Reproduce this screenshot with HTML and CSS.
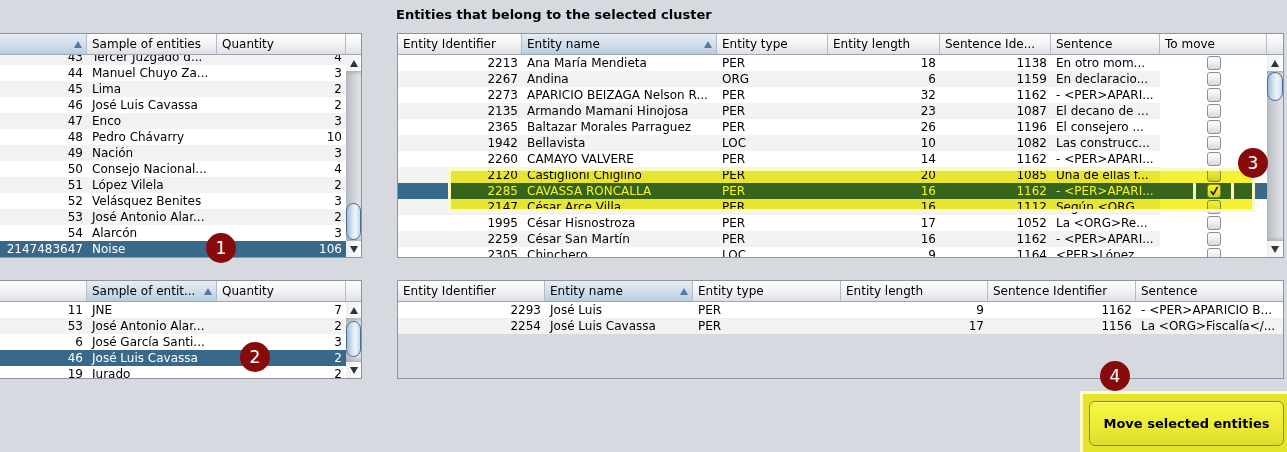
FILE: index.html
```html
<!DOCTYPE html>
<html>
<head>
<meta charset="utf-8">
<link rel="stylesheet" href="styles.css">
</head>
<body>
<div class="screen">
  <div class="app">
    <div class="left">
      <div class="table lt">
        <div class="thead">
          <div class="th sorted"><span class="arrow"></span></div>
          <div class="th">Sample of entities</div>
          <div class="th">Quantity</div>
          <div class="th corner"></div>
        </div>
        <div class="tbody">
          <div class="viewport">
            <div class="rows scrolled">
              <div class="row s"><span class="n">43</span><span>Tercer Juzgado d...</span><span class="n">4</span></div>
              <div class="row"><span class="n">44</span><span>Manuel Chuyo Za...</span><span class="n">3</span></div>
              <div class="row s"><span class="n">45</span><span>Lima</span><span class="n">2</span></div>
              <div class="row"><span class="n">46</span><span>José Luis Cavassa</span><span class="n">2</span></div>
              <div class="row s"><span class="n">47</span><span>Enco</span><span class="n">3</span></div>
              <div class="row"><span class="n">48</span><span>Pedro Chávarry</span><span class="n">10</span></div>
              <div class="row s"><span class="n">49</span><span>Nación</span><span class="n">3</span></div>
              <div class="row"><span class="n">50</span><span>Consejo Nacional...</span><span class="n">4</span></div>
              <div class="row s"><span class="n">51</span><span>López Vilela</span><span class="n">2</span></div>
              <div class="row"><span class="n">52</span><span>Velásquez Benites</span><span class="n">3</span></div>
              <div class="row s"><span class="n">53</span><span>José Antonio Alar...</span><span class="n">2</span></div>
              <div class="row"><span class="n">54</span><span>Alarcón</span><span class="n">3</span></div>
              <div class="row sel"><span class="n">2147483647</span><span>Noise</span><span class="n">106</span></div>
            </div>
          </div>
          <div class="sb">
            <div class="sb-btn up"></div>
            <div class="track"><div class="thumb th-lt"></div></div>
            <div class="sb-btn down"></div>
          </div>
        </div>
      </div>

      <div class="table lb">
        <div class="thead">
          <div class="th"></div>
          <div class="th sorted"><span>Sample of entit...</span><span class="arrow"></span></div>
          <div class="th">Quantity</div>
          <div class="th corner"></div>
        </div>
        <div class="tbody">
          <div class="viewport">
            <div class="rows">
              <div class="row"><span class="n">11</span><span>JNE</span><span class="n">7</span></div>
              <div class="row s"><span class="n">53</span><span>José Antonio Alar...</span><span class="n">2</span></div>
              <div class="row"><span class="n">6</span><span>José García Santi...</span><span class="n">3</span></div>
              <div class="row sel"><span class="n">46</span><span>José Luis Cavassa</span><span class="n">2</span></div>
              <div class="row"><span class="n">19</span><span>Jurado</span><span class="n">2</span></div>
            </div>
          </div>
          <div class="sb">
            <div class="sb-btn up"></div>
            <div class="track"><div class="thumb th-lb"></div></div>
            <div class="sb-btn down"></div>
          </div>
        </div>
      </div>
    </div>

    <div class="right">
      <h2 class="title">Entities that belong to the selected cluster</h2>

      <div class="table rt">
        <div class="thead">
          <div class="th">Entity Identifier</div>
          <div class="th sorted"><span>Entity name</span><span class="arrow"></span></div>
          <div class="th">Entity type</div>
          <div class="th">Entity length</div>
          <div class="th">Sentence Ide...</div>
          <div class="th">Sentence</div>
          <div class="th">To move</div>
          <div class="th corner"></div>
        </div>
        <div class="tbody">
          <div class="viewport">
            <div class="rows">
              <div class="row"><span class="n">2213</span><span>Ana María Mendieta</span><span>PER</span><span class="n">18</span><span class="n">1138</span><span>En otro mom...</span><span class="cb"><i class="box"></i></span></div>
              <div class="row s"><span class="n">2267</span><span>Andina</span><span>ORG</span><span class="n">6</span><span class="n">1159</span><span>En declaracio...</span><span class="cb"><i class="box"></i></span></div>
              <div class="row"><span class="n">2273</span><span>APARICIO BEIZAGA Nelson R...</span><span>PER</span><span class="n">32</span><span class="n">1162</span><span>- &lt;PER&gt;APARI...</span><span class="cb"><i class="box"></i></span></div>
              <div class="row s"><span class="n">2135</span><span>Armando Mamani Hinojosa</span><span>PER</span><span class="n">23</span><span class="n">1087</span><span>El decano de ...</span><span class="cb"><i class="box"></i></span></div>
              <div class="row"><span class="n">2365</span><span>Baltazar Morales Parraguez</span><span>PER</span><span class="n">26</span><span class="n">1196</span><span>El consejero ...</span><span class="cb"><i class="box"></i></span></div>
              <div class="row s"><span class="n">1942</span><span>Bellavista</span><span>LOC</span><span class="n">10</span><span class="n">1082</span><span>Las construcc...</span><span class="cb"><i class="box"></i></span></div>
              <div class="row"><span class="n">2260</span><span>CAMAYO VALVERE</span><span>PER</span><span class="n">14</span><span class="n">1162</span><span>- &lt;PER&gt;APARI...</span><span class="cb"><i class="box"></i></span></div>
              <div class="row s"><span class="n">2120</span><span>Castiglioni Chiglino</span><span>PER</span><span class="n">20</span><span class="n">1085</span><span>Una de ellas f...</span><span class="cb"><i class="box"></i></span></div>
              <div class="row sel"><span class="n">2285</span><span>CAVASSA RONCALLA</span><span>PER</span><span class="n">16</span><span class="n">1162</span><span>- &lt;PER&gt;APARI...</span><span class="cb"><i class="box checked"><svg width="10" height="10" viewBox="0 0 10 10"><path d="M1.8 5.2 L4.3 8.3 L8.6 0.8" fill="none" stroke="#1e1e1e" stroke-width="1.7"/></svg></i></span></div>
              <div class="row s"><span class="n">2147</span><span>César Arce Villa</span><span>PER</span><span class="n">16</span><span class="n">1112</span><span>Según &lt;ORG...</span><span class="cb"><i class="box"></i></span></div>
              <div class="row"><span class="n">1995</span><span>César Hisnostroza</span><span>PER</span><span class="n">17</span><span class="n">1052</span><span>La &lt;ORG&gt;Re...</span><span class="cb"><i class="box"></i></span></div>
              <div class="row s"><span class="n">2259</span><span>César San Martín</span><span>PER</span><span class="n">16</span><span class="n">1162</span><span>- &lt;PER&gt;APARI...</span><span class="cb"><i class="box"></i></span></div>
              <div class="row"><span class="n">2305</span><span>Chinchero</span><span>LOC</span><span class="n">9</span><span class="n">1164</span><span>&lt;PER&gt;López...</span><span class="cb"><i class="box"></i></span></div>
            </div>
          </div>
          <div class="sb">
            <div class="sb-btn up"></div>
            <div class="track"><div class="thumb th-rt"></div></div>
            <div class="sb-btn down"></div>
          </div>
        </div>
        <div class="hl"><div class="hl-fill"></div></div>
        <div class="focus"></div>
      </div>

      <div class="table rb">
        <div class="thead">
          <div class="th">Entity Identifier</div>
          <div class="th sorted"><span>Entity name</span><span class="arrow"></span></div>
          <div class="th">Entity type</div>
          <div class="th">Entity length</div>
          <div class="th">Sentence Identifier</div>
          <div class="th last">Sentence</div>
        </div>
        <div class="tbody">
          <div class="viewport">
            <div class="rows">
              <div class="row"><span class="n">2293</span><span>José Luis</span><span>PER</span><span class="n">9</span><span class="n">1162</span><span>- &lt;PER&gt;APARICIO B...</span></div>
              <div class="row s"><span class="n">2254</span><span>José Luis Cavassa</span><span>PER</span><span class="n">17</span><span class="n">1156</span><span>La &lt;ORG&gt;Fiscalía&lt;/...</span></div>
            </div>
          </div>
        </div>
      </div>

      <div class="actions">
        <div class="hlbox">
          <button class="btn">Move selected entities</button>
        </div>
      </div>
    </div>
  </div>

  <div class="badge b1">1</div>
  <div class="badge b2">2</div>
  <div class="badge b3">3</div>
  <div class="badge b4">4</div>
</div>
</body>
</html>
```

FILE: styles.css
```css
* { box-sizing: border-box; }
html, body { margin: 0; padding: 0; }
body {
  width: 1287px;
  height: 452px;
  overflow: hidden;
  background: #d6d9df;
  font-family: "DejaVu Sans", sans-serif;
  font-size: 12px;
  color: #000;
}
.screen { position: relative; width: 1287px; height: 452px; overflow: hidden; }
.app { display: flex; gap: 35px; }

.left {
  flex: none;
  width: 402px;
  margin-left: -40px;
  padding-top: 33px;
  display: flex;
  flex-direction: column;
  gap: 22px;
}
.right { flex: none; width: 887px; display: flex; flex-direction: column; }
.title {
  margin: 0 0 10px -1px;
  padding-top: 7px;
  font-size: 13px;
  line-height: 16px;
  font-weight: bold;
}

.table { border: 1px solid #8f949b; background: #fff; }
.lt, .lb { --cols: 126px 130px 129px; --hcols: 126px 130px 129px 15px; }
.lt, .rt { --bh: 202px; }
.lb, .rb { --bh: 76px; }
.rt { position: relative; --cols: 124px 195px 111px 112px 111px 109px 107px; --hcols: 124px 195px 111px 112px 111px 109px 107px 16px; }
.rb { margin-top: 22px; background: #d6d9df; --cols: 147px 148px 148px 147px 148px 147px; --hcols: var(--cols); }

.thead {
  display: grid;
  grid-template-columns: var(--hcols);
  height: 21px;
  border-bottom: 1px solid #a2a7af;
}
.th {
  height: 20px;
  line-height: 20px;
  padding: 0 4px 0 5px;
  border-right: 1px solid #b6bac2;
  background: linear-gradient(#fdfdfe, #f3f4f6 45%, #e6e8eb 80%, #dcdfe4);
  white-space: nowrap;
  overflow: hidden;
  display: flex;
  align-items: center;
}
.th.corner, .th.last { border-right: none; }
.th.sorted { background: linear-gradient(#e6edf4, #d3e0ec 45%, #c3d5e6 80%, #b7cbdf); }
.arrow {
  flex: none;
  margin-left: auto;
  width: 0;
  height: 0;
  border-left: 4px solid transparent;
  border-right: 4px solid transparent;
  border-bottom: 7px solid #5079a6;
}

.tbody { display: flex; height: var(--bh); }
.viewport { flex: 1; overflow: hidden; }
.rows.scrolled { margin-top: -6px; }
.row {
  display: grid;
  grid-template-columns: var(--cols);
  height: 16px;
  line-height: 16px;
  background: #fff;
}
.row.s { background: #f2f2f2; }
.row.sel { background: #39698a; color: #fff; }
.row > span { padding: 0 4px 0 5px; white-space: nowrap; overflow: hidden; }
.row > span.n { text-align: right; padding: 0 4px 0 0; }
.row > span.cb { padding: 0; display: flex; align-items: center; justify-content: center; background: #fff; }
.row.sel > span.cb { background: transparent; }
.box {
  display: flex;
  align-items: center;
  justify-content: center;
  width: 14px;
  height: 14px;
  border: 1px solid #8b8f96;
  border-radius: 3px;
  background: linear-gradient(#fefefe, #eceef1 55%, #d6d9de);
}

/* scrollbar */
.sb {
  flex: none;
  display: flex;
  flex-direction: column;
  background: linear-gradient(to right, #b7bbc2, #d3d6db 60%, #e4e6e9);
}
.lt .sb, .lb .sb { width: 15px; }
.rt .sb { width: 16px; }
.sb-btn {
  flex: none;
  height: 16px;
  display: flex;
  align-items: center;
  justify-content: center;
  background: linear-gradient(to right, #eef0f2, #fbfbfc);
}
.sb-btn.up::after, .sb-btn.down::after {
  content: "";
  width: 0;
  height: 0;
  border-left: 4px solid transparent;
  border-right: 4px solid transparent;
}
.sb-btn.up::after { border-bottom: 7px solid #303236; }
.sb-btn.down::after { border-top: 7px solid #303236; }
.track { flex: 1; box-shadow: inset 0 4px 4px -3px #9ea3ab, inset 0 -4px 4px -3px #9ea3ab; }
.thumb {
  border: 1px solid #4a6b92;
  border-radius: 9px;
  background: linear-gradient(to right, #9ebcda, #d6e3f0 40%, #eef4f9 65%, #c7d9ea);
}
.th-lt { margin-top: 132px; height: 37px; }
.th-lb { margin-top: 3px; height: 36px; }
.th-rt { margin-top: 1px; height: 29px; }

/* highlight overlay */
.hl {
  position: absolute;
  left: 50px;
  top: 134px;
  width: 807px;
  height: 44px;
  border: 3px solid #fbfbc4;
}
.hl-fill {
  position: absolute;
  inset: 0;
  background: #f4f232;
  mix-blend-mode: multiply;
}
.focus {
  position: absolute;
  left: 795px;
  top: 149px;
  width: 41px;
  height: 16px;
  border-left: 3px solid #f9f9c8;
  border-right: 3px solid #f9f9c8;
}

/* action button */
.actions { display: flex; justify-content: flex-end; margin-top: 12px; margin-right: -10px; }
.hlbox {
  border: 3px solid #fdfdc6;
  background: #e4e42c;
  padding: 7px 7px 7px 6px;
}
.btn {
  display: block;
  width: 195px;
  height: 45px;
  margin: 0;
  padding: 0;
  border: 1px solid #8c8c22;
  border-radius: 6px;
  background: linear-gradient(#f6f644, #ecec38 50%, #dcdc2c);
  box-shadow: inset 0 1px 0 #fafa90;
  font-family: "DejaVu Sans", sans-serif;
  font-weight: bold;
  font-size: 13px;
  color: #000;
}

/* badges */
.badge {
  position: absolute;
  width: 30px;
  height: 30px;
  border-radius: 50%;
  background: #880b0b;
  color: #fff;
  font-size: 17px;
  line-height: 30px;
  text-align: center;
}
.b1 { left: 206px; top: 233px; }
.b2 { left: 240px; top: 342px; }
.b3 { left: 1238px; top: 148px; }
.b4 { left: 1100px; top: 361px; }
```
